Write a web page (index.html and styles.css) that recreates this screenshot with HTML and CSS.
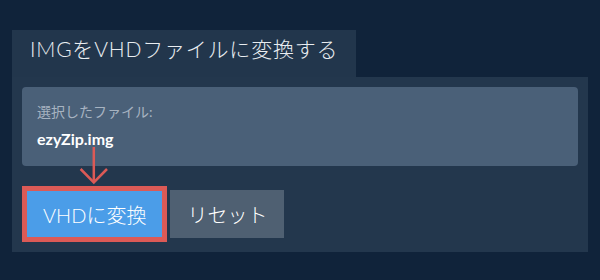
FILE: index.html
```html
<!DOCTYPE html>
<html lang="ja">
<head>
    <meta charset="UTF-8">
    <meta name="viewport" content="width=device-width, initial-scale=1.0">
    <title>IMGをVHDファイルに変換する</title>
    <link rel="stylesheet" href="styles.css">
</head>
<body>
    <div class="wrap">
        <h2 class="tab">IMGをVHDファイルに変換する</h2>
        <div class="panel">
            <div class="file-box">
                <div class="file-label">選択したファイル:</div>
                <div class="file-name">ezyZip.img</div>
            </div>
            <div class="actions">
                <button class="btn btn-convert">VHDに変換</button>
                <button class="btn btn-reset">リセット</button>
            </div>
            <!-- hint arrow pointing at the convert button -->
            <svg class="hint-arrow" width="32" height="40" viewBox="0 0 32 40">
                <line x1="15.8" y1="2" x2="15.8" y2="37" stroke="#dc5a56" stroke-width="2.5"/>
                <polyline points="2.6,24 15.8,37.4 29,24" fill="none" stroke="#dc5a56" stroke-width="2.5"/>
            </svg>
        </div>
    </div>
</body>
</html>
```

FILE: styles.css
```css
body {
    margin: 0;
    background-color: #10233a;
    font-family: Lato, "Noto Sans CJK JP", sans-serif;
    color: #ffffff;
}
.wrap {
    padding: 30px 0 0 12px;
    width: 576px;
}
.tab {
    display: inline-block;
    margin: 0;
    padding: 6px 18px 16px;
    font-size: 21px;
    line-height: 25px;
    font-weight: 300;
    letter-spacing: 0.8px;
    color: #e9edf1;
    background: #22364c;
}
.panel {
    position: relative;
    background: #23374d;
    padding: 10px;
}
.file-box {
    background: #4a6078;
    border-radius: 4px;
    padding: 15px 15px 17px;
}
.file-label {
    font-size: 14px;
    line-height: 20px;
    color: #a7b3c1;
}
.file-name {
    margin-top: 7px;
    font-size: 16px;
    line-height: 20px;
    font-weight: 700;
}
.actions {
    display: flex;
    align-items: center;
    gap: 3px;
    margin-top: 20px;
}
.btn {
    font-family: Lato, "Noto Sans CJK JP", sans-serif;
    font-size: 20px;
    font-weight: 300;
    color: #ffffff;
    border: none;
    cursor: pointer;
    box-sizing: border-box;
}
.btn-convert {
    height: 56px;
    padding: 0 16px;
    background: #4b9de8;
    border: 5px solid #dc5a56;
}
.btn-reset {
    height: 48px;
    padding: 0 17px;
    background: #4f6072;
}
.hint-arrow {
    position: absolute;
    left: 66px;
    top: 68px;
}
```
